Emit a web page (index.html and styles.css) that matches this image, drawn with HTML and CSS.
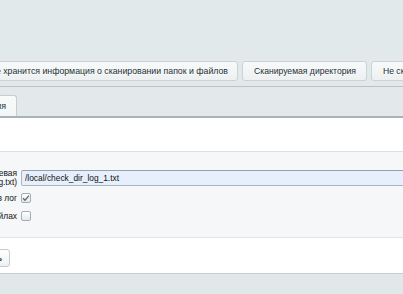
FILE: index.html
```html
<!DOCTYPE html>
<html lang="ru">
<head>
    <meta charset="UTF-8">
    <meta name="viewport" content="width=device-width, initial-scale=1.0">
    <title>Проверка директорий</title>
    <link rel="stylesheet" href="styles.css">
</head>
<body>
    <div class="top"></div>

    <div class="tabs">
        <div class="tab tab-first">В этом файле хранится информация о сканировании папок и файлов</div>
        <div class="tab">Сканируемая директория</div>
        <div class="tab">Не сканируемые директории</div>
    </div>

    <div class="subtabs">
        <div class="subtab">Настройки сканирования</div>
    </div>

    <div class="blank"></div>

    <div class="fields">
        <div class="row row-input">
            <label class="label" for="log-path">Путь к файлу лога, директория корневая<br>(по умолчанию /local/check_dir_log.txt)</label>
            <input class="text-input" type="text" id="log-path" value="/local/check_dir_log_1.txt">
        </div>
        <div class="row">
            <span class="label">Записывать в лог</span>
            <span class="check">
                <svg width="8" height="8" viewBox="0 0 8 8"><path d="M1 4.2 L3 6.2 L7 1.6" fill="none" stroke="#5b6b72" stroke-width="1.3"/></svg>
            </span>
        </div>
        <div class="row">
            <span class="label">Учитывать информацию о скрытых файлах</span>
            <span class="check"></span>
        </div>
    </div>

    <div class="buttons">
        <button class="btn">Сохранить</button>
    </div>

    <div class="footer"></div>
</body>
</html>
```

FILE: styles.css
```css
html, body {
    overflow: hidden;
}

body {
    margin: 0;
    font-family: "Liberation Sans", Arial, sans-serif;
    background-color: #e2e9eb;
    width: 403px;
}

.top {
    height: 61px;
}

.tabs {
    display: flex;
    gap: 4px;
    height: 25px;
    white-space: nowrap;
}

.tab {
    flex: none;
    box-sizing: border-box;
    height: 20px;
    line-height: 18px;
    padding: 0 10px 0 11px;
    font-size: 8.6px;
    color: #242d31;
    border: 1px solid #cbd3d5;
    border-radius: 3px;
    background: linear-gradient(#f8fafa, #edf1f2);
    text-shadow: 0 1px 0 #fff;
}

.tab-first {
    width: 420px;
    margin-left: -182px;
    text-align: right;
    padding-right: 9px;
    font-size: 8.75px;
}

.subtabs {
    height: 21px;
    border-top: 1px solid #b9c3c6;
    border-bottom: 2px solid #a9b3b6;
    padding-top: 8px;
    background-color: #e3e9eb;
}

.subtab {
    box-sizing: border-box;
    width: 150px;
    margin-left: -133px;
    height: 21px;
    line-height: 20px;
    text-align: right;
    padding-right: 10px;
    font-size: 8.9px;
    color: #242d31;
    border: 1px solid #c6ced1;
    border-bottom: none;
    border-radius: 3px 3px 0 0;
    background: linear-gradient(#f9fbfb, #f3f6f6);
}

.blank {
    height: 33px;
    background-color: #fff;
    border-bottom: 1px solid #dbe1e3;
}

.fields {
    background-color: #f5f7f8;
    padding: 17px 0 12px;
    border-bottom: 1px solid #e0e5e6;
}

.row {
    display: grid;
    grid-template-columns: 300px 1fr;
    column-gap: 4px;
    align-items: center;
    height: 18px;
    margin-left: -283px;
    font-size: 8.4px;
    color: #111;
}

.row-input {
    height: 17px;
    margin-bottom: 3px;
}

.label {
    text-align: right;
    line-height: 8.5px;
}

.text-input {
    box-sizing: border-box;
    width: 600px;
    height: 16px;
    margin: 0;
    padding: 0 3px;
    font-family: "Liberation Sans", Arial, sans-serif;
    font-size: 8.4px;
    color: #111;
    background-color: #e6effb;
    border: 1px solid #a7b6c0;
    border-top-color: #93a3ae;
    border-radius: 2px;
    outline: none;
}

.check {
    box-sizing: border-box;
    width: 10px;
    height: 10px;
    display: flex;
    align-items: center;
    justify-content: center;
    border: 1px solid #a3adb2;
    border-radius: 2px;
    background: linear-gradient(#fff, #e4e9eb);
}

.buttons {
    background-color: #fff;
    height: 36px;
    padding-top: 9px;
    box-sizing: border-box;
    border-bottom: 1px solid #c6ced1;
}

.btn {
    box-sizing: border-box;
    width: 70px;
    height: 18px;
    margin-left: -60px;
    padding: 0 7px 0 0;
    text-align: right;
    font-family: "Liberation Sans", Arial, sans-serif;
    font-size: 8.7px;
    font-weight: bold;
    color: #3a4448;
    border: 1px solid #c3cbce;
    border-radius: 3px;
    background: linear-gradient(#fff, #eef1f2);
}

.footer {
    height: 20px;
    background-color: #e1e8ea;
}
```
